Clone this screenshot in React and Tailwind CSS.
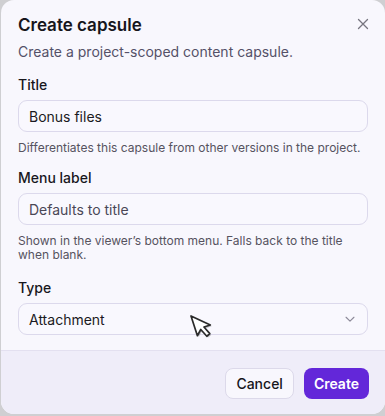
import React from 'react';

// Create capsule dialog
const fieldCls =
  'w-full h-[32px] rounded-[9px] border border-[#dcd9ec] bg-[#f9f8fe] px-[10px] text-[14px] text-[#1b1a22] flex items-center';

function Field({ label, children, hint, className = '' }) {
  return (
    <div className={'flex flex-col ' + className}>
      <label className="text-[14px] font-medium text-[#18171d] leading-[18px] mb-[6px]">{label}</label>
      {children}
      {hint && <p className="mt-[9px] text-[12px] leading-[14px] text-[#56535f]">{hint}</p>}
    </div>
  );
}

export default function App() {
  return (
    <div
      className="w-[385px] h-[416px] bg-[#cfcfd2] relative"
      style={{ fontFamily: 'Inter, "Noto Sans", sans-serif' }}
    >
      <div className="absolute left-[1px] top-0 w-[384px] h-[414px] rounded-[13px] bg-[#f8f7fd] overflow-hidden flex flex-col">
        {/* Body */}
        <div className="px-[17px] pt-[14px] flex-1">
          <div className="flex items-start justify-between">
            <h2 className="text-[17px] font-semibold leading-[22px] text-[#16151b]">Create capsule</h2>
            <button className="mt-[2px] mr-[-3px] text-[#77757f]">
              <svg width="16" height="16" viewBox="0 0 16 16" fill="none" stroke="currentColor" strokeWidth="1.3" strokeLinecap="round">
                <path d="M3.5 3.5l9 9M12.5 3.5l-9 9" />
              </svg>
            </button>
          </div>
          <p className="mt-[7px] text-[14px] leading-[18px] text-[#545168]">Create a project-scoped content capsule.</p>

          <div className="mt-[15px] flex flex-col gap-[14px]">
            <Field label="Title" hint="Differentiates this capsule from other versions in the project.">
              <div className={fieldCls}>Bonus files</div>
            </Field>
            <Field label="Menu label" hint="Shown in the viewer’s bottom menu. Falls back to the title when blank.">
              <div className={fieldCls + ' text-[#4a4756]'}>Defaults to title</div>
            </Field>
            <Field label="Type" className="mt-[3px]">
              <div className={fieldCls + ' justify-between'}>
                <span>Attachment</span>
                <svg width="14" height="14" viewBox="0 0 16 16" fill="none" stroke="#8d8a99" strokeWidth="1.3" strokeLinecap="round" strokeLinejoin="round">
                  <path d="M3.5 6l4.5 4.5L12.5 6" />
                </svg>
              </div>
            </Field>
          </div>
        </div>

        {/* Footer */}
        <div className="h-[64px] border-t border-[#e3e0f0] bg-[#efedf9] flex items-center justify-end gap-[10px] px-[16px] pt-[2px]">
          <button className="h-[31px] px-[10px] rounded-[8px] border border-[#dcd9ea] bg-[#f8f7fd] text-[14px] font-medium text-[#16151b]">
            Cancel
          </button>
          <button className="h-[31px] px-[10px] rounded-[8px] bg-[#6327d9] text-[14px] font-semibold text-white">
            Create
          </button>
        </div>
      </div>

      {/* Pointer cursor */}
      <svg className="absolute left-[184px] top-[310px]" width="36" height="36" viewBox="0 0 36 36">
        <g transform="translate(7 6) rotate(-18) scale(1.22)">
          <path d="M0 0 L0 17 L4.2 13 L7.2 19.8 L10.2 18.5 L7.3 11.9 L12.8 11.9 Z" fill="#000" opacity="0.2" transform="translate(0.8 1.4)" />
          <path d="M0 0 L0 17 L4.2 13 L7.2 19.8 L10.2 18.5 L7.3 11.9 L12.8 11.9 Z" fill="#fff" stroke="#2a2a2a" strokeWidth="1.4" strokeLinejoin="round" />
        </g>
      </svg>
    </div>
  );
}
